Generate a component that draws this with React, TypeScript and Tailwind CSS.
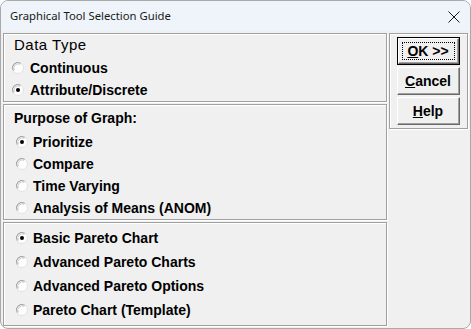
import React from "react";

const Radio = ({ checked }: { checked?: boolean }) => (
  <svg width="12" height="12" viewBox="0 0 12 12" className="shrink-0">
    <circle cx="6" cy="6" r="5.5" fill="#fdfdfd" stroke="#e2e2e2" />
    <path d="M1.3 8.6 A5.3 5.3 0 0 1 8.6 1.3" stroke="#9a9a9a" fill="none" strokeWidth="1" />
    <path d="M2.3 8 A4.3 4.3 0 0 1 8 2.3" stroke="#cfcfcf" fill="none" strokeWidth="1" />
    {checked && <circle cx="6" cy="6" r="2" fill="#000" />}
  </svg>
);

const Option = ({ label, checked, h, pl, gap }: { label: string; checked?: boolean; h: string; pl: string; gap: string }) => (
  <div className={`flex items-center ${h} ${pl} ${gap}`}>
    <Radio checked={checked} />
    <span className="text-[14px] font-bold leading-none text-black">{label}</span>
  </div>
);

const frame = "border border-[#a0a0a0] shadow-[inset_1px_1px_0_#ffffff,1px_1px_0_#ffffff]";

const Btn = ({ children, def }: { children: React.ReactNode; def?: boolean }) => (
  <div className={`h-[28px] w-[63px] ${def ? "border border-black" : ""}`}>
    <div className="h-full w-full border border-t-white border-l-white border-r-[#696969] border-b-[#696969] shadow-[inset_-1px_-1px_0_#a0a0a0] flex items-center justify-center relative">
      {def && <div className="absolute inset-[3px] border border-dotted border-black" />}
      <span className="text-[14px] font-bold leading-none text-black">{children}</span>
    </div>
  </div>
);

export default function App() {
  return (
    <div
      className="w-[471px] h-[329px] rounded-t-[8px] rounded-b-[8px] border border-[#a9a9a9] bg-[#f0f0f0] overflow-hidden flex flex-col"
      style={{ fontFamily: '"Liberation Sans", Arial, sans-serif' }}
    >
      <div className="h-[30px] bg-[#eef4f9] flex items-center justify-between pl-[9px] pr-[9px] shrink-0">
        <span className="text-[11.3px] text-[#1a1a1a]" style={{ fontFamily: '"Noto Sans", "Open Sans", sans-serif' }}>
          Graphical Tool Selection Guide
        </span>
        <svg width="12" height="12" viewBox="0 0 12 12" className="mr-[1px] mt-[1px]">
          <path d="M0.5 0.5 L11.5 11.5 M11.5 0.5 L0.5 11.5" stroke="#1a1a1a" strokeWidth="1" />
        </svg>
      </div>
      <div className="flex pl-[2px] pt-[2px] gap-[2px]">
        <div className="w-[384px] flex flex-col gap-[2px]">
          <div className={`${frame} flex flex-col`}>
            <div className="h-[20px] flex items-center pl-[10px]">
              <span className="text-[15px] leading-none tracking-[0.5px] text-black">Data Type</span>
            </div>
            <div className="h-[3px]" />
            <Option label="Continuous" h="h-[22px]" pl="pl-[8px]" gap="gap-[6px]" />
            <Option label="Attribute/Discrete" checked h="h-[22px]" pl="pl-[8px]" gap="gap-[6px]" />
          </div>
          <div className={`${frame} flex flex-col`}>
            <div className="h-[26px] flex items-center pl-[10px]">
              <span className="text-[14px] font-bold leading-none text-black">Purpose of Graph:</span>
            </div>
            <Option label="Prioritize" checked h="h-[22px]" pl="pl-[12px]" gap="gap-[5px]" />
            <Option label="Compare" h="h-[22px]" pl="pl-[12px]" gap="gap-[5px]" />
            <Option label="Time Varying" h="h-[22px]" pl="pl-[12px]" gap="gap-[5px]" />
            <Option label="Analysis of Means (ANOM)" h="h-[22px]" pl="pl-[12px]" gap="gap-[5px]" />
          </div>
          <div className={`${frame} flex flex-col py-[3px]`}>
            <Option label="Basic Pareto Chart" checked h="h-[24px]" pl="pl-[12px]" gap="gap-[5px]" />
            <Option label="Advanced Pareto Charts" h="h-[24px]" pl="pl-[12px]" gap="gap-[5px]" />
            <Option label="Advanced Pareto Options" h="h-[24px]" pl="pl-[12px]" gap="gap-[5px]" />
            <Option label="Pareto Chart (Template)" h="h-[24px]" pl="pl-[12px]" gap="gap-[5px]" />
          </div>
        </div>
        <div className={`${frame} w-[79px] self-start flex flex-col items-center gap-[2px] py-[3px] pr-[1px]`}>
          <Btn def>
            <span className="underline">O</span>K &gt;&gt;
          </Btn>
          <Btn>
            <span className="underline">C</span>ancel
          </Btn>
          <Btn>
            <span className="underline">H</span>elp
          </Btn>
        </div>
      </div>
    </div>
  );
}
